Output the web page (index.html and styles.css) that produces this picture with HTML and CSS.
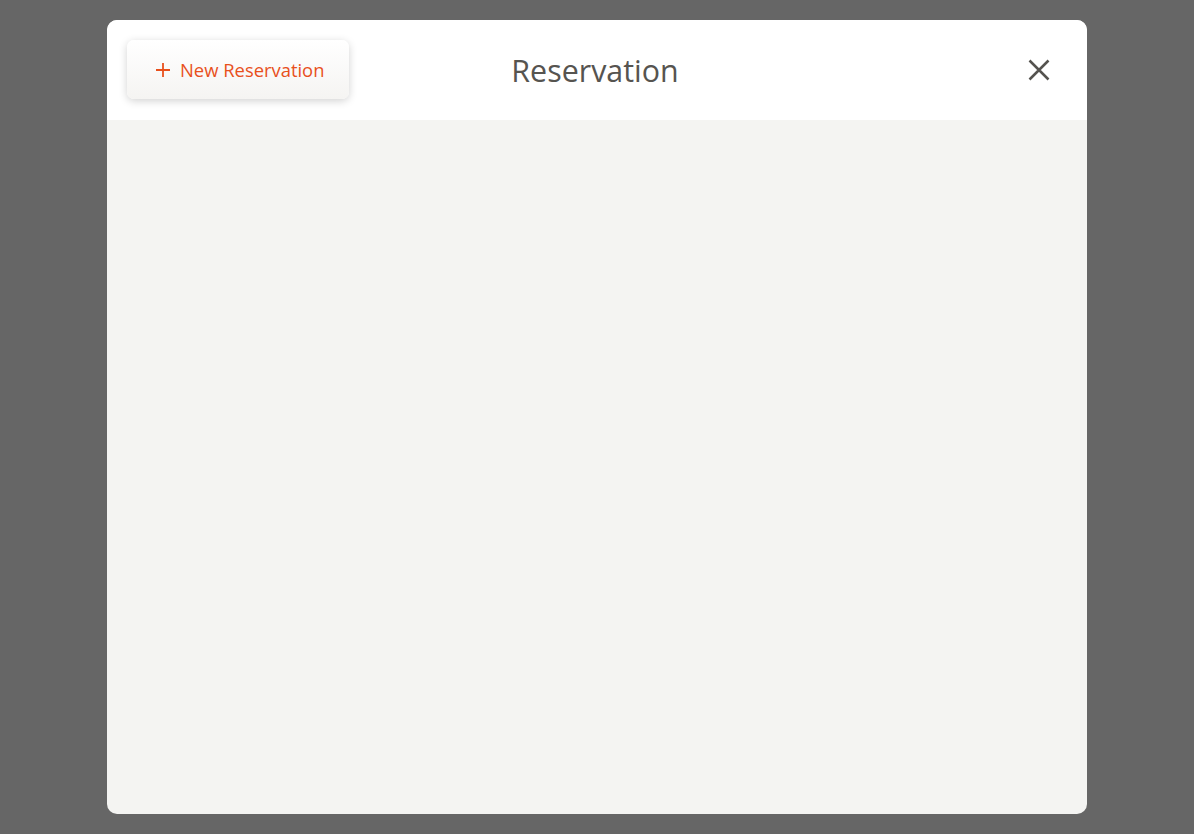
FILE: index.html
```html
<!DOCTYPE html>
<html lang="en">
<head>
<meta charset="utf-8">
<title>Reservation</title>
<link rel="stylesheet" href="styles.css">
</head>
<body>
<div class="modal">
  <header class="modal-header">
    <button class="new-btn" type="button">
      <svg class="plus" width="14" height="14" viewBox="0 0 14 14"><path d="M7 0V14M0 7H14" stroke="currentColor" stroke-width="1.8" fill="none"/></svg>
      <span>New Reservation</span>
    </button>
    <h1 class="title">Reservation</h1>
    <button class="close" type="button" aria-label="Close">
      <svg width="22" height="22" viewBox="0 0 22 22"><path d="M1.5 1.5L20.5 20.5M20.5 1.5L1.5 20.5" stroke="currentColor" stroke-width="2.5" fill="none"/></svg>
    </button>
  </header>
  <main class="modal-body"></main>
</div>
</body>
</html>
```
FILE: styles.css
```css
html, body {
  margin: 0;
  padding: 0;
  height: 100%;
}
body {
  background: #666666;
  font-family: "Open Sans", "Noto Sans", sans-serif;
  padding: 20px 0;
  box-sizing: border-box;
}
.modal {
  width: 980px;
  height: 794px;
  margin: 0 auto;
  background: #f4f4f2;
  border-radius: 10px;
  overflow: hidden;
  display: flex;
  flex-direction: column;
}
.modal-header {
  height: 100px;
  background: #ffffff;
  display: grid;
  grid-template-columns: 1fr auto 1fr;
  align-items: center;
  padding: 0 20px;
  flex-shrink: 0;
}
.new-btn {
  justify-self: start;
  display: flex;
  align-items: center;
  gap: 10px;
  width: 222px;
  height: 59px;
  padding: 0 0 0 29px;
  border: none;
  border-radius: 7px;
  background: linear-gradient(#ffffff, #f5f4f2);
  box-shadow: 0 2px 8px rgba(0,0,0,0.18);
  color: #e8501c;
  font-family: "Open Sans", "Noto Sans", sans-serif;
  font-size: 18.4px;
  cursor: pointer;
  margin-top: -1px;
}
.plus {
  display: block;
}
.title {
  margin: 0 0 0 -4px;
  font-size: 30.4px;
  font-weight: 400;
  color: #565450;
}
.close {
  justify-self: end;
  margin-right: 17px;
  background: none;
  border: none;
  padding: 0;
  color: #55534f;
  display: flex;
  cursor: pointer;
}
.modal-body {
  flex: 1;
}
```
